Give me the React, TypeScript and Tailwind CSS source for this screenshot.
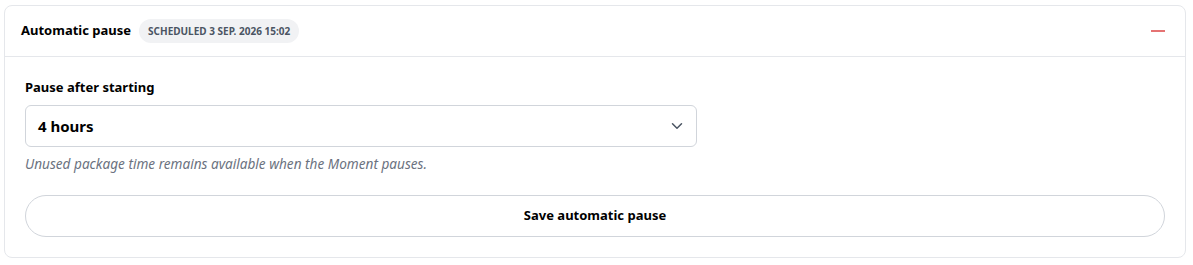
import { ChevronDown } from "lucide-react";

export default function App() {
  return (
    <div className="w-[1193px] h-[265px] bg-white font-['Noto_Sans',sans-serif] text-black">
      <div className="ml-1 mt-[5px] w-[1182px] rounded-lg border border-[#e5e7eb] bg-white">
        {/* header */}
        <div className="flex h-[51px] items-center justify-between border-b border-[#e5e7eb] pl-4 pr-5">
          <div className="flex items-center gap-2">
            <span className="text-[13px] font-bold">Automatic pause</span>
            <span className="rounded-full bg-[#f1f2f4] px-[9px] py-[5px] text-[10px] font-bold uppercase leading-[14px] text-[#4b5563]">
              Scheduled 3 sep. 2026 15:02
            </span>
          </div>
          <span className="h-[2px] w-[14px] bg-[#e57373]"></span>
        </div>

        {/* body */}
        <div className="px-5 pt-5 pb-5">
          <div className="mb-2 text-[13px] font-bold leading-5">Pause after starting</div>
          <div className="flex h-[42px] w-[672px] items-center justify-between rounded-md border border-[#d1d5db] pl-3 pr-[10px]">
            <span className="text-[15px] font-bold">4 hours</span>
            <ChevronDown size={18} strokeWidth={2} className="text-[#4b5563]" />
          </div>
          <div className="mt-2 text-[13.6px] italic leading-[18px] text-[#6b7280]">
            Unused package time remains available when the Moment pauses.
          </div>
          <button className="mt-[22px] flex h-[42px] w-full items-center justify-center rounded-full border border-[#d1d5db] bg-white text-[13px] font-bold">
            Save automatic pause
          </button>
        </div>
      </div>
    </div>
  );
}
